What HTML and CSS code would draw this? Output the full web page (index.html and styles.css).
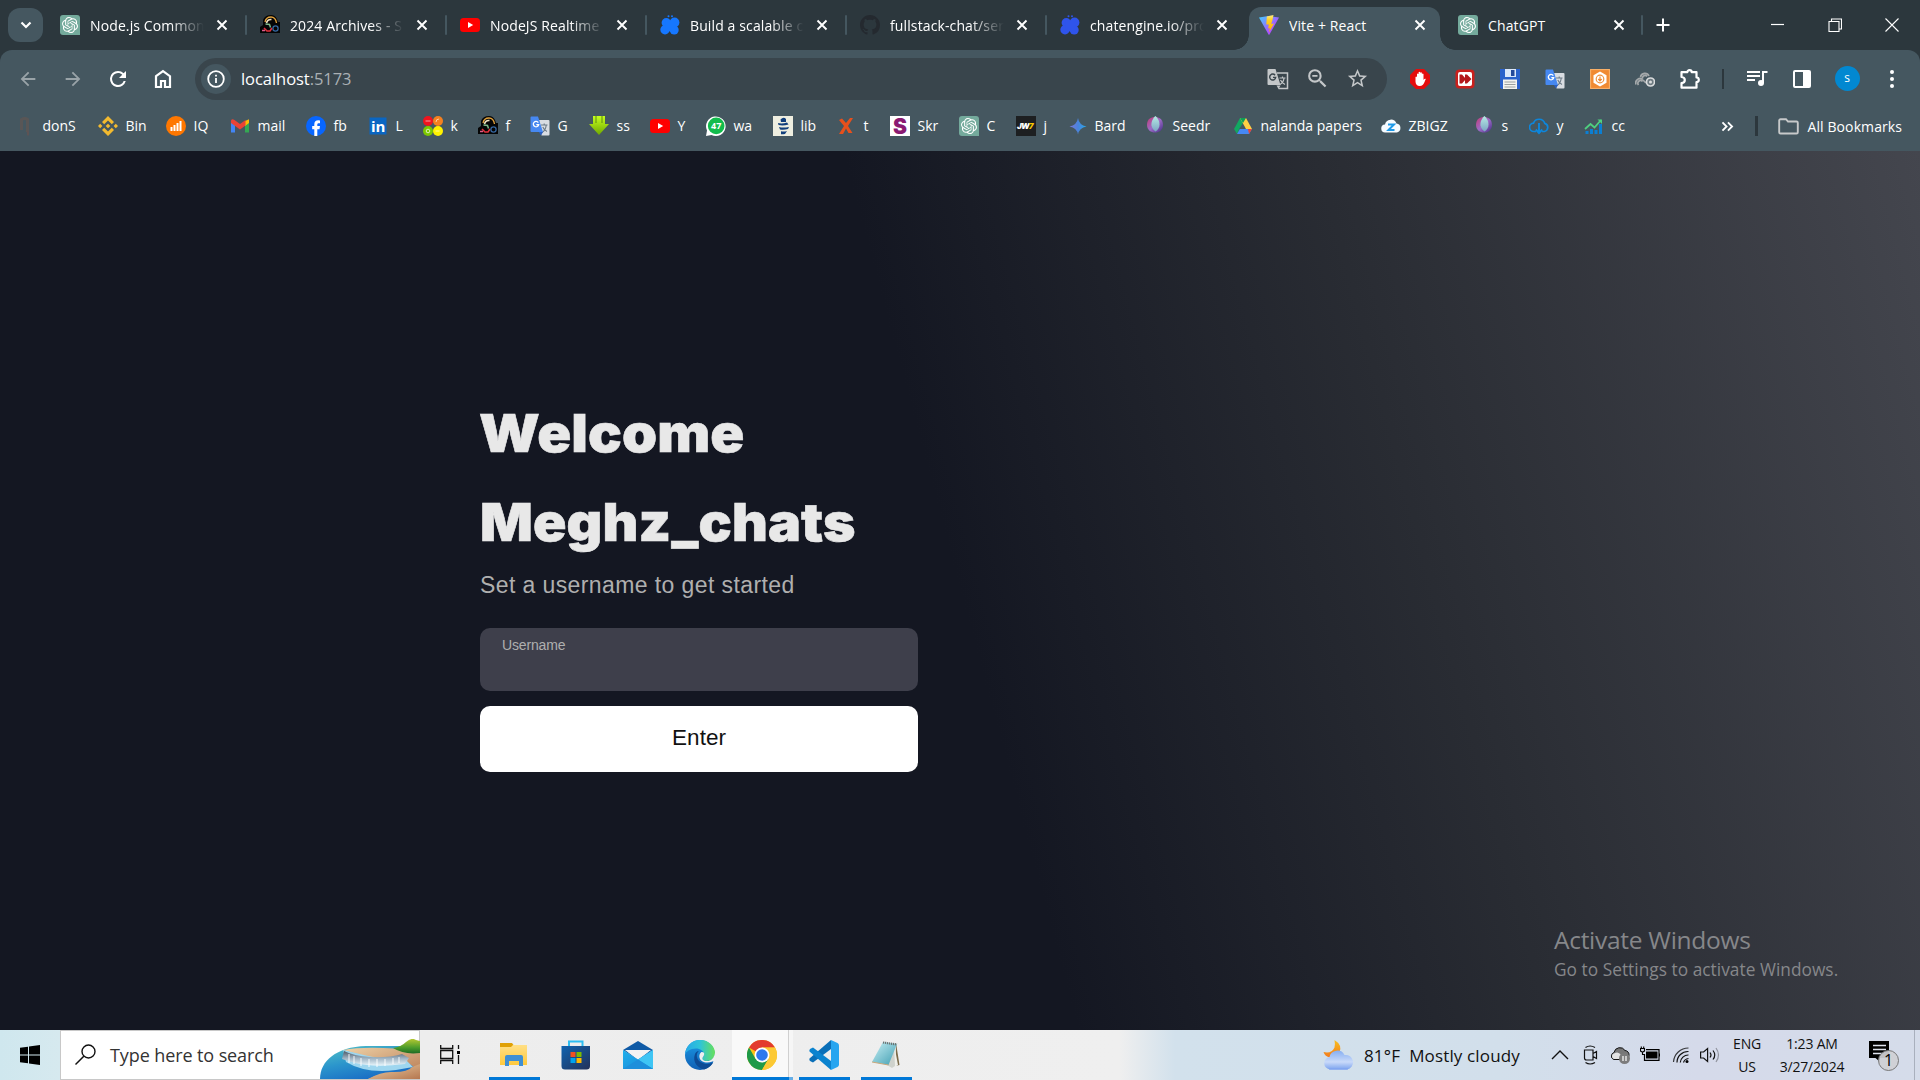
FILE: index.html
```html
<!DOCTYPE html>
<html lang="en">
<head>
<meta charset="utf-8">
<title>Vite + React</title>
<link rel="stylesheet" href="styles.css">
</head>
<body>
<svg class="defs" aria-hidden="true">
  <defs>
    <linearGradient id="gVite" x1="0" y1="0" x2="1" y2="1"><stop offset="0" stop-color="#41d1ff"/><stop offset=".6" stop-color="#a45cff"/><stop offset="1" stop-color="#bd34fe"/></linearGradient>
    <linearGradient id="gBolt" x1="0" y1="0" x2="0" y2="1"><stop offset="0" stop-color="#ffea83"/><stop offset=".3" stop-color="#ffcf20"/><stop offset="1" stop-color="#ffa800"/></linearGradient>
    <linearGradient id="gSeed" x1="0" y1="0" x2="1" y2="1"><stop offset="0" stop-color="#c23a75"/><stop offset=".5" stop-color="#9d6cc8"/><stop offset="1" stop-color="#432c83"/></linearGradient>
    <linearGradient id="gSeed2" x1="0" y1="0" x2="0" y2="1"><stop offset="0" stop-color="#b5ebe4"/><stop offset="1" stop-color="#7da4c4"/></linearGradient>
    <linearGradient id="gBard" x1="0" y1="0" x2="1" y2="0"><stop offset="0" stop-color="#7b78d8"/><stop offset=".5" stop-color="#4a83dc"/><stop offset="1" stop-color="#27a9e8"/></linearGradient>
    <linearGradient id="gDown" x1="0" y1="0" x2="0" y2="1"><stop offset="0" stop-color="#c5ff1e"/><stop offset="1" stop-color="#6fa800"/></linearGradient>
    <linearGradient id="gStore" x1="0" y1="0" x2="1" y2="1"><stop offset="0" stop-color="#0f63b0"/><stop offset="1" stop-color="#243158"/></linearGradient>
    <linearGradient id="gMail" x1="0" y1="0" x2="1" y2="1"><stop offset="0" stop-color="#1fb0ec"/><stop offset="1" stop-color="#1a86d6"/></linearGradient>
    <linearGradient id="gEdge" x1="0" y1="0" x2="1" y2="0"><stop offset="0" stop-color="#27a8e8"/><stop offset=".5" stop-color="#2fc4d8"/><stop offset="1" stop-color="#67e05a"/></linearGradient>
    <linearGradient id="gEdge2" x1="0" y1="0" x2="0" y2="1"><stop offset="0" stop-color="#1c9be6"/><stop offset="1" stop-color="#0f5fb4"/></linearGradient>
    <linearGradient id="gPad" x1="0" y1="0" x2="1" y2="1"><stop offset="0" stop-color="#c9f0f5"/><stop offset="1" stop-color="#3f9eb2"/></linearGradient>
    <linearGradient id="gFold" x1="0" y1="0" x2="0" y2="1"><stop offset="0" stop-color="#ffdf85"/><stop offset="1" stop-color="#ffc93d"/></linearGradient>
    <linearGradient id="gMoon" x1="0" y1="0" x2="0" y2="1"><stop offset="0" stop-color="#f9c01e"/><stop offset="1" stop-color="#f2791d"/></linearGradient>
    <linearGradient id="gCloud" x1="0" y1="0" x2="0" y2="1"><stop offset="0" stop-color="#86aef2"/><stop offset=".6" stop-color="#c9daf9"/><stop offset="1" stop-color="#7ba2ee"/></linearGradient>
    <linearGradient id="gSea" x1="0" y1="0" x2=".6" y2="1"><stop offset="0" stop-color="#55c4c6"/><stop offset=".5" stop-color="#2b95cc"/><stop offset="1" stop-color="#1769c4"/></linearGradient>
    <linearGradient id="gRock" x1="0" y1="0" x2="1" y2="1"><stop offset="0" stop-color="#eed2a8"/><stop offset="1" stop-color="#b5774f"/></linearGradient>
    <linearGradient id="gHill" x1="0" y1="0" x2="0" y2="1"><stop offset="0" stop-color="#b5c832"/><stop offset=".6" stop-color="#4c9c2b"/><stop offset="1" stop-color="#1d6a25"/></linearGradient>
    <linearGradient id="gFall" x1="0" y1="0" x2="0" y2="1"><stop offset="0" stop-color="#4c5866"/><stop offset=".5" stop-color="#9fb4c4"/><stop offset="1" stop-color="#e9f7fd"/></linearGradient>
  </defs>
  <symbol id="close" viewBox="0 0 12 12"><path d="M1.500 1.500l9 9M10.500 1.500l-9 9" stroke="#fff" stroke-width="1.900"/></symbol>
  <symbol id="gpt" viewBox="0 0 20 20"><path d="M3 0h14a3 3 0 0 1 3 3v17H3a3 3 0 0 1-3-3V3a3 3 0 0 1 3-3z" fill="#74aa9c"/><path transform="translate(2 2) scale(.667)" fill="#fff" d="M22.2819 9.8211a5.9847 5.9847 0 0 0-.5157-4.9108 6.0462 6.0462 0 0 0-6.5098-2.9A6.0651 6.0651 0 0 0 4.9807 4.1818a5.9847 5.9847 0 0 0-3.9977 2.9 6.0462 6.0462 0 0 0 .7427 7.0966 5.98 5.98 0 0 0 .511 4.9107 6.051 6.051 0 0 0 6.5146 2.9001A5.9847 5.9847 0 0 0 13.2599 24a6.0557 6.0557 0 0 0 5.7718-4.2058 5.9894 5.9894 0 0 0 3.9977-2.9001 6.0557 6.0557 0 0 0-.7475-7.0729zm-9.022 12.6081a4.4755 4.4755 0 0 1-2.8764-1.0408l.1419-.0804 4.7783-2.7582a.7948.7948 0 0 0 .3927-.6813v-6.7369l2.02 1.1686a.071.071 0 0 1 .038.052v5.5826a4.504 4.504 0 0 1-4.4945 4.4944zm-9.6607-4.1254a4.4708 4.4708 0 0 1-.5346-3.0137l.142.0852 4.783 2.7582a.7712.7712 0 0 0 .7806 0l5.8428-3.3685v2.3324a.0804.0804 0 0 1-.0332.0615L9.74 19.9502a4.4992 4.4992 0 0 1-6.1408-1.6464zM2.3408 7.8956a4.485 4.485 0 0 1 2.3655-1.9728V11.6a.7664.7664 0 0 0 .3879.6765l5.8144 3.3543-2.0201 1.1685a.0757.0757 0 0 1-.071 0l-4.8303-2.7865A4.504 4.504 0 0 1 2.3408 7.872zm16.5963 3.8558L13.1038 8.364 15.1192 7.2a.0757.0757 0 0 1 .071 0l4.8303 2.7913a4.4944 4.4944 0 0 1-.6765 8.1042v-5.6772a.79.79 0 0 0-.407-.667zm2.0107-3.0231l-.142-.0852-4.7735-2.7818a.7759.7759 0 0 0-.7854 0L9.409 9.2297V6.8974a.0662.0662 0 0 1 .0284-.0615l4.8303-2.7866a4.4992 4.4992 0 0 1 6.6802 4.66zM8.3065 12.863l-2.02-1.1638a.0804.0804 0 0 1-.038-.0567V6.0742a4.4992 4.4992 0 0 1 7.3757-3.4537l-.142.0805L8.704 5.459a.7948.7948 0 0 0-.3927.6813zm1.0976-2.3654l2.602-1.4998 2.6069 1.4998v2.9994l-2.5974 1.4997-2.6067-1.4997Z"/></symbol>
  <symbol id="ftp" viewBox="0 0 20 20"><path d="M3 5Q5 0 11 0q4 0 6 4l1 3h2v11H0v-6l3-2z" fill="#050505"/><path d="M5 7q1-5 6-5 4.500 0 5.500 6" fill="none" stroke="#e2a23c" stroke-width="1.300"/><path d="M6.500 8q1-4 5-3.500" fill="none" stroke="#f3e4c4" stroke-width="1.600"/><path d="M5.500 9l4 .5 1 3" fill="none" stroke="#7fb98a" stroke-width="1.500"/><path d="M4 13l3 3h3l2-3" fill="none" stroke="#e0303c" stroke-width="1.600"/><path d="M2 15.500h3" stroke="#de5b8b" stroke-width="1.500"/><circle cx="15.500" cy="13.500" r="2.600" fill="none" stroke="#3567a0" stroke-width="1.300"/></symbol>
  <symbol id="yt" viewBox="0 0 20 20"><rect y="3" width="20" height="14" rx="3.500" fill="#f00"/><path d="M8 7l5.200 3L8 13z" fill="#fff"/></symbol>
  <symbol id="bug" viewBox="0 0 20 20"><circle cx="6.300" cy="7.700" r="4.700"/><circle cx="14.500" cy="7.500" r="4.900"/><circle cx="5" cy="14.800" r="4.700"/><circle cx="14.200" cy="15" r="4.500"/><path d="M6 6h9v9l-5 1.500L5 14z"/><circle cx="8.500" cy="1.300" r="1"/><circle cx="12" cy="1.300" r="1"/></symbol>
  <symbol id="github" viewBox="0 0 16 16"><path fill="#24292f" d="M8 0C3.580 0 0 3.580 0 8c0 3.540 2.290 6.530 5.470 7.590.4.070.55-.17.55-.38 0-.19-.01-.82-.01-1.490-2.010.37-2.530-.49-2.690-.94-.09-.23-.48-.94-.82-1.130-.28-.15-.68-.52-.01-.53.63-.01 1.080.58 1.230.82.72 1.210 1.870.87 2.330.66.070-.52.28-.87.51-1.070-1.780-.2-3.640-.89-3.640-3.950 0-.87.31-1.590.82-2.150-.08-.2-.36-1.020.08-2.120 0 0 .67-.21 2.200.82.64-.18 1.320-.27 2-.27s1.360.09 2 .27c1.530-1.040 2.200-.82 2.200-.82.44 1.100.16 1.920.08 2.120.51.56.82 1.270.82 2.150 0 3.070-1.870 3.750-3.650 3.950.29.25.54.73.54 1.480 0 1.070-.01 1.930-.01 2.200 0 .21.15.46.55.38A8.010 8.010 0 0 0 16 8c0-4.420-3.580-8-8-8z"/></symbol>
  <symbol id="gtr" viewBox="0 0 20 20"><path d="M9 4h9.500a1 1 0 0 1 1 1v13.500a1 1 0 0 1-1 1h-7z" fill="#d9dde2"/><path d="M11 9h6.500M14.200 7.500V9M12 16.500q4-2.500 4.200-7.500M12.800 11q1.500 3.500 4.200 4.500" stroke="#6b7a86" stroke-width="1.100" fill="none"/><path d="M1.500.5H8l5 15.500H1.500a1 1 0 0 1-1-1V1.500a1 1 0 0 1 1-1z" fill="#4688f1"/><path d="M8.800 16h4.200l-2 3.500z" fill="#2c5fc0"/><path d="M8.300 6.600A2.700 2.700 0 1 0 8.700 8.600H6.300" fill="none" stroke="#fff" stroke-width="1.300"/></symbol>
  <symbol id="seedr" viewBox="0 0 20 20"><path d="M10 1C6 1 2 3 2 9c0 5 4 7.500 8 7.500S18 14 18 9c0-6-4-8-8-8z" fill="url(#gSeed)"/><path d="M10.500 0C8 2 6 6 6.500 9.500c.5 3 2.500 5 4 6 2.500-1.500 4-4 4-7C14.500 5 13 2 10.500 0z" fill="url(#gSeed2)"/></symbol>
</svg>

<div class="screen">
  <header class="browser">
    <div class="tabstrip">
      <div class="tabsearch"><svg width="12" height="8" viewBox="0 0 12 8"><path d="M1.500 1.500L6 6l4.500-4.500" fill="none" stroke="#fff" stroke-width="2.200"/></svg></div>
      <div class="tabs">
        <div class="tab"><svg class="fav"><use href="#gpt"/></svg><span class="title fade">Node.js Common</span><svg class="x"><use href="#close"/></svg></div>
        <div class="tab"><svg class="fav"><use href="#ftp"/></svg><span class="title fade">2024 Archives - S</span><svg class="x"><use href="#close"/></svg></div>
        <div class="tab"><svg class="fav"><use href="#yt"/></svg><span class="title fade">NodeJS Realtime</span><svg class="x"><use href="#close"/></svg></div>
        <div class="tab"><svg class="fav bug-a"><use href="#bug"/></svg><span class="title fade">Build a scalable c</span><svg class="x"><use href="#close"/></svg></div>
        <div class="tab"><svg class="fav"><use href="#github"/></svg><span class="title fade">fullstack-chat/ser</span><svg class="x"><use href="#close"/></svg></div>
        <div class="tab bare"><svg class="fav bug-b"><use href="#bug"/></svg><span class="title fade">chatengine.io/pro</span><svg class="x"><use href="#close"/></svg></div>
        <div class="tab active"><svg class="fav" viewBox="0 0 20 20"><path d="M0 2.500L9.500 1l.5 0L20 2.500 10.500 19.500q-.5.700-1 0z" fill="url(#gVite)"/><path d="M14.500 0L7.800 1.400l-.5 8h2.500l-.7 4 1.700-.4-.8 4.500 5-9-2.700.4 1.300-4.500z" fill="url(#gBolt)"/></svg><span class="title">Vite + React</span><svg class="x"><use href="#close"/></svg></div>
        <div class="tab last"><svg class="fav"><use href="#gpt"/></svg><span class="title">ChatGPT</span><svg class="x"><use href="#close"/></svg></div>
      </div>
      <svg class="newtab" viewBox="0 0 14 14"><path d="M7 .5v13M.5 7h13" stroke="#fff" stroke-width="2"/></svg>
      <div class="winctl">
        <svg viewBox="0 0 14 14"><path d="M0 6.500h13" stroke="#fff" stroke-width="1.200"/></svg>
        <svg viewBox="0 0 14 14"><path d="M1 3.500h10v10H1zM3.500 3.500V1h10v10H11" fill="none" stroke="#fff" stroke-width="1.100"/></svg>
        <svg viewBox="0 0 14 14"><path d="M.5.5l13 13M13.500.5l-13 13" stroke="#fff" stroke-width="1.100"/></svg>
      </div>
    </div>

    <div class="chrome">
      <div class="toolbar">
        <div class="cell dim"><svg class="i20" viewBox="0 0 24 24"><path d="M20 11H7.830l5.590-5.590L12 4l-8 8 8 8 1.410-1.410L7.830 13H20z" transform="translate(-1.200 -1.200) scale(1.100)"/></svg></div>
        <div class="cell dim"><svg class="i20" viewBox="0 0 24 24"><path d="M4 11h12.170l-5.590-5.590L12 4l8 8-8 8-1.410-1.410L16.170 13H4z" transform="translate(-1.200 -1.200) scale(1.100)"/></svg></div>
        <div class="cell"><svg class="i24" viewBox="0 0 24 24"><path d="M17.650 6.350A7.960 7.960 0 0 0 12 4a8 8 0 1 0 7.730 10h-2.080A6 6 0 1 1 12 6c1.660 0 3.140.69 4.220 1.780L13 11h7V4z"/></svg></div>
        <div class="cell"><svg class="i20" viewBox="0 0 20 20"><path d="M3 7.200L10 2l7 5.200V18h-5v-6H8v6H3z" fill="none" stroke="#fff" stroke-width="2.200"/></svg></div>
        <div class="omnibox">
          <div class="info"><svg width="18" height="18" viewBox="0 0 18 18"><circle cx="9" cy="9" r="7.800" fill="none" stroke="#fff" stroke-width="1.800"/><path d="M9 8v5M9 4.800v1.800" stroke="#fff" stroke-width="1.800"/></svg></div>
          <span class="url">localhost<i>:5173</i></span>
          <div class="omni-icons">
            <svg width="22" height="22" viewBox="0 0 22 22"><path d="M10 5h10.500v15.500H11.500" fill="none" stroke="#c4c7c9" stroke-width="1.500"/><path d="M12.500 10h6M15.500 8.500V10M13 16.500q3.800-2.500 4-6.500M13.500 12q1.500 3 4.500 4.500" fill="none" stroke="#c4c7c9" stroke-width="1.200"/><path d="M1.500 1h7l5 16H1.500a1 1 0 0 1-1-1V2a1 1 0 0 1 1-1z" fill="#c4c7c9"/><path d="M9.500 17.500h4l-2 3.500z" fill="#c4c7c9"/><path d="M8.100 7.200A3 3 0 1 0 8.700 9.400H6" fill="none" stroke="#39454c" stroke-width="1.400"/></svg>
            <svg width="25" height="25" viewBox="0 0 24 24" fill="#c4c7c9"><path d="M15.500 14h-.79l-.28-.27A6.471 6.471 0 0 0 16 9.500 6.500 6.500 0 1 0 9.500 16c1.610 0 3.090-.59 4.230-1.570l.27.28v.79l5 4.990L20.490 19zm-6 0A4.500 4.500 0 1 1 14 9.500 4.500 4.500 0 0 1 9.500 14zM7 8.700h5v1.600H7z"/></svg>
            <svg width="23" height="23" viewBox="0 0 24 24" fill="#c4c7c9"><path d="M22 9.240l-7.190-.62L12 2 9.190 8.630 2 9.240l5.460 4.730L5.820 21 12 17.270 18.180 21l-1.630-7.030L22 9.240zM12 15.400l-3.760 2.270 1-4.280-3.320-2.880 4.380-.38L12 6.100l1.710 4.040 4.380.38-3.320 2.880 1 4.280z"/></svg>
          </div>
        </div>
        <div class="ext">
          <div class="cell"><svg class="i20" viewBox="0 0 20 20"><path d="M6 0h8l6 6v8l-6 6H6l-6-6V6z" fill="#e40d0d"/><path d="M5.500 8v4.500C5.500 15 7 17 9.800 17c2.500 0 3.500-1.500 4.500-3.500l1.500-3.500c-.8-.7-1.600-.2-2.300 1V5q-.8-1.200-1.600 0V3.800q-.8-1.100-1.700 0V3.200q-.8-1-1.600 0V5Q7.800 3.800 7 5v3q-.8-1-1.500 0z" fill="#fff"/></svg></div>
          <div class="cell"><svg class="i20" viewBox="0 0 20 20"><rect x=".5" y=".5" width="19" height="19" rx="4" fill="#c9201d"/><rect x="3" y="3" width="14" height="14" rx="2" fill="#fff"/><path d="M4.500 5.500H7l4 4.500-4 4.500H4.500V5.500zM10 5.500h2l4.500 4.500-4.500 4.500h-2z" fill="#b3181b"/></svg></div>
          <div class="cell"><svg class="i20" viewBox="0 0 20 20"><path d="M0 0h20v20H1.500L0 18.500z" fill="#2a62cb"/><path d="M5 0h11v8H5z" fill="#dbe8fb"/><path d="M11 1h3.500v6H11z" fill="#244a9b"/><path d="M3 10.500h14V20H3z" fill="#f4f4f0"/><path d="M4.500 13h11M4.500 15.500h11M4.500 18h11" stroke="#9aa0a0"/></svg></div>
          <div class="cell"><svg class="i20"><use href="#gtr"/></svg></div>
          <div class="cell"><svg class="i20" viewBox="0 0 20 20"><rect width="20" height="20" fill="#f08a32"/><rect x=".6" y=".6" width="18.800" height="18.800" fill="none" stroke="#f8b36f"/><path d="M10 2.500l6.500 3.700v7.600L10 17.500l-6.500-3.700V6.200z" fill="#fff"/><circle cx="10" cy="10" r="3.800" fill="none" stroke="#ee9342" stroke-width="1.200"/><path d="M10 7.500v4M8.300 10l1.700 1.800 1.700-1.800" fill="none" stroke="#ee8a32" stroke-width="1.200"/></svg></div>
          <div class="cell"><svg class="i20" viewBox="0 0 20 20"><g fill="none" stroke="#a5a9ab" stroke-width="1.700"><path d="M1 15.500a4.500 4.500 0 0 1 7-5M3.500 16a2.500 2.500 0 0 1 4-3.500M5.500 8a4.500 4.500 0 0 1 8.500-1M7.500 9a2.500 2.500 0 0 1 4.500-1.500M8 11l3 3"/></g><circle cx="15.500" cy="13" r="4" fill="#6d7a80" stroke="#dadcdd" stroke-width="1.700"/><circle cx="15.500" cy="13" r="1.500" fill="#dadcdd"/></svg></div>
          <div class="cell"><svg class="i22" viewBox="0 0 22 22"><path d="M2.500 4.200h5.800a2.200 2 0 0 1 4.400 0h4.800v5.300a2.200 2.200 0 0 1 0 4.600v5.600h-15v-4.500q3.300-.5 3.300-3.200t-3.300-3z" fill="none" stroke="#fff" stroke-width="2.200" stroke-linejoin="round"/></svg></div>
        </div>
        <div class="vline"></div>
        <div class="ext">
          <div class="cell"><svg class="i24" viewBox="0 0 24 24"><path d="M15 4H2v2h13zm0 4H2v2h13zM2 14h8v-2H2zM17 4v9.200c-.31-.11-.65-.18-1-.18a3 3 0 1 0 3 3V6h3.500V4z"/></svg></div>
          <div class="cell"><svg class="i20" viewBox="0 0 20 20"><path d="M3 1h14a2 2 0 0 1 2 2v14a2 2 0 0 1-2 2H3a2 2 0 0 1-2-2V3a2 2 0 0 1 2-2zm0 2v14h8V3z" fill-rule="evenodd"/></svg></div>
          <div class="cell"><span class="avatar">s</span></div>
          <div class="cell"><svg class="i20" viewBox="0 0 20 20"><circle cx="10" cy="3" r="2"/><circle cx="10" cy="10" r="2"/><circle cx="10" cy="17" r="2"/></svg></div>
        </div>
      </div>

      <div class="bookbar">
        <div class="bookmarks">
          <div class="bm"><svg viewBox="0 0 20 20"><path d="M6.500 14V3.500q3.500-2 6 0V16" fill="none" stroke="#595656" stroke-width="3"/><path d="M13 15v4.500" stroke="#5d5354" stroke-width="2"/></svg>donS</div>
          <div class="bm"><svg viewBox="0 0 20 20" fill="#f3ba2f"><path d="M10 0l6 6-2.200 2.200L10 4.400 6.200 8.200 4 6zM2.200 7.800L4.400 10l-2.200 2.200L0 10zM10 7.700l2.300 2.300-2.300 2.300L7.700 10zM17.800 7.800L20 10l-2.200 2.200-2.200-2.200zM10 20l6-6-2.200-2.200-3.800 3.800-3.800-3.800L4 14z"/></svg>Bin</div>
          <div class="bm"><svg viewBox="0 0 20 20"><circle cx="10" cy="10" r="10" fill="#ff7700"/><path d="M5.500 15v-4M8.500 15V9M11.500 15V7M14.500 15V5" stroke="#fff" stroke-width="2"/></svg>IQ</div>
          <div class="bm"><svg viewBox="0 0 20 20"><path d="M1 5v11.500h4V9z" fill="#4285f4"/><path d="M19 5v11.500h-4V9z" fill="#34a853"/><path d="M15 5l4-1.800V7l-4 3z" fill="#fbbc04"/><path d="M1 4.500Q2 2.500 4.500 4L10 8l5.500-4v5.500L10 13.500 1 7z" fill="#ea4335"/></svg>mail</div>
          <div class="bm"><svg viewBox="0 0 20 20"><circle cx="10" cy="10" r="10" fill="#0866ff"/><path d="M8.300 20v-6.800H6.200V10h2.100V8.500c0-3 1.500-4.200 4-4.200l1.700.1v2.900h-1.200c-1.200 0-1.500.5-1.500 1.500V10h2.700l-.5 3.200h-2.200V20z" fill="#fff"/></svg>fb</div>
          <div class="bm"><svg viewBox="0 0 20 20"><rect x="1.500" y="1.500" width="17" height="17" fill="#0a66c2"/><text x="3" y="15.500" class="ic-in">in</text></svg>L</div>
          <div class="bm"><svg viewBox="0 0 20 20"><circle cx="5" cy="5" r="5" fill="#f0141e"/><circle cx="15" cy="5" r="5" fill="#f5801f"/><circle cx="5" cy="15" r="5" fill="#7cc800"/><circle cx="15" cy="15" r="5" fill="#fff200"/><path d="M2.500 5h5M13 6q0-3 3-3M12.500 15h4" stroke="#fff" stroke-opacity=".6" fill="none"/><circle cx="5" cy="15" r="1.800" fill="none" stroke="#fff" stroke-opacity=".7"/></svg>k</div>
          <div class="bm"><svg><use href="#ftp"/></svg>f</div>
          <div class="bm"><svg><use href="#gtr"/></svg>G</div>
          <div class="bm"><svg viewBox="0 0 20 20"><path d="M4 0h12v8h4l-10 11L0 8h4z" fill="url(#gDown)"/><path d="M7 0v7M13 0v7" stroke="#5f8a10"/></svg>ss</div>
          <div class="bm"><svg><use href="#yt"/></svg>Y</div>
          <div class="bm"><svg viewBox="0 0 20 20"><path d="M0 20l1-5.500A9.800 9.800 0 1 1 5.500 19z" fill="#fff"/><circle cx="10.200" cy="9.900" r="8.300" fill="#12bc4c"/><text x="10.200" y="13.300" text-anchor="middle" class="ic-47">47</text></svg>wa</div>
          <div class="bm"><svg viewBox="0 0 20 20"><rect width="20" height="20" fill="#eeeee0"/><path d="M7.500 3.500q3-3 5.500-.5v3H8zM5 7q4 1 9-.5l1.500 2Q10 10 5.500 9zM6 11q4 1 10 0l-1 2q-4 1.200-8 .5zM8 15.300q3 .7 6-.3l-2 3q-3 .5-4 .2z" fill="#123f7c"/></svg>lib</div>
          <div class="bm"><svg viewBox="0 0 20 20"><path d="M3 4l3-1.500L10 7l4-5h3l-5 8 4.500 7h-4L10 12.500 7 18H3l5-8z" fill="#e8501c"/></svg>t</div>
          <div class="bm"><svg viewBox="0 0 20 20"><rect width="20" height="20" fill="#fff"/><text x="10" y="17.500" text-anchor="middle" class="ic-s">S</text></svg>Skr</div>
          <div class="bm"><svg><use href="#gpt"/></svg>C</div>
          <div class="bm"><svg viewBox="0 0 20 20"><rect width="20" height="20" fill="#1d1f21"/><text x="1" y="13" class="ic-jw">JW<tspan fill="#f5c400">7</tspan></text></svg>j</div>
          <div class="bm"><svg viewBox="0 0 20 20"><path d="M11 2q1 7 8.500 8.500Q12 12 11 18.500 10 12 2.500 10.500 10 9 11 2z" fill="url(#gBard)"/></svg>Bard</div>
          <div class="bm"><svg><use href="#seedr"/></svg>Seedr</div>
          <div class="bm"><svg viewBox="0 0 20 20"><path d="M7 2h6l-6.500 10.500L4 18l-3-5z" fill="#11a861"/><path d="M13 2l6 11h-6L7 2z" fill="#ffcf44"/><path d="M7 2h6l-3 5z" fill="#0f9d58"/><path d="M6.800 13H19l-3 5H4z" fill="#4688f4"/><path d="M15 13h4l-3 5z" fill="#ea4335"/></svg>nalanda papers</div>
          <div class="bm"><svg viewBox="0 0 20 20"><path d="M4.500 16.500a4 4 0 0 1-.5-8 6 6 0 0 1 11.500-1 4.600 4.600 0 0 1 .5 9z" fill="#f6fbff"/><path d="M7 8.500h6l-5.500 5.500H13.500" fill="none" stroke="#1e9ae8" stroke-width="2"/></svg>ZBIGZ</div>
          <div class="bm"><svg><use href="#seedr"/></svg>s</div>
          <div class="bm"><svg viewBox="0 0 20 20"><path d="M7 15.500H5a4.200 4.200 0 0 1-.5-8.400 6 6 0 0 1 11.300.3 4.200 4.200 0 0 1-.3 8.100H13" fill="none" stroke="#0d86dc" stroke-width="1.700"/><path d="M10 7v9M6.800 13.500L10 17l3.200-3.500" fill="none" stroke="#0d86dc" stroke-width="1.900"/></svg>y</div>
          <div class="bm"><svg viewBox="0 0 20 20"><path d="M3 18v-3M7.500 18v-5M12 18v-4M16.500 18V8" stroke="#0b7fd3" stroke-width="3"/><path d="M1 13l5.500-5 4 3.500L17 4" fill="none" stroke="#4fd07f" stroke-width="1.800"/><path d="M13.500 3.500H18V8z" fill="#4fd07f"/></svg>cc</div>
        </div>
        <svg class="more" viewBox="0 0 14 12"><path d="M1.500 1.500L6 6l-4.500 4.500M7.500 1.500L12 6l-4.500 4.500" fill="none" stroke="#fff" stroke-width="2"/></svg>
        <div class="vline"></div>
        <svg class="folder" viewBox="0 0 21 17"><path d="M2.500 1.200h5.500l2 2.300h8.500a1.300 1.300 0 0 1 1.300 1.300v9.400a1.300 1.300 0 0 1-1.300 1.300h-16a1.300 1.300 0 0 1-1.300-1.300V2.500a1.300 1.300 0 0 1 1.300-1.300z" fill="none" stroke="#c7c9ca" stroke-width="1.900"/></svg>
        <span class="all">All Bookmarks</span>
      </div>
    </div>
  </header>

  <main class="page">
    <form class="auth">
      <h1>Welcome</h1>
      <h1 class="second">Meghz_chats</h1>
      <p>Set a username to get started</p>
      <div class="field">Username</div>
      <button type="button">Enter</button>
    </form>
    <aside class="watermark"><div class="w1">Activate Windows</div><div class="w2">Go to Settings to activate Windows.</div></aside>
  </main>

  <footer class="taskbar">
    <div class="start"><svg width="20" height="20" viewBox="0 0 20 20"><path d="M0 2.800l8-1.100v7.800H0zM9 1.500L20 0v9.500H9zM0 10.500h8v7.800l-8-1.100zM9 10.500h11V20L9 18.500z"/></svg></div>
    <div class="search">
      <svg width="22" height="22" viewBox="0 0 22 22"><circle cx="13.500" cy="7.500" r="6.500" fill="none" stroke="#111" stroke-width="1.400"/><path d="M8.800 12.200L.5 20.500" stroke="#111" stroke-width="1.500"/></svg>
      <span>Type here to search</span>
      <svg class="falls" width="100" height="40" viewBox="0 0 100 40"><path d="M0 40C0 22 16 8 46 7h54v33z" fill="url(#gSea)"/><path d="M23 11Q50 6 100 12v28H48q18-9 40-6l6-6-12-8q-25 0-38-3z" fill="url(#gRock)"/><path d="M23 11l3 12q20 12 50 8l17-3-9-9q-22 2-40-3z" fill="#9ed6ef"/><path d="M24 12q10 5 26 6 18 1 32-3l7 4-4 6q-30 4-50-1L22 20z" fill="url(#gFall)"/><path d="M29 15v9M34 17v8M41 19v8M49 20v8M57 20v8M65 20v7M73 19v6M79 18v6" stroke="#fff" stroke-width="1.500" opacity=".6"/><path d="M48 40q14-8 26-7 14 0 18-5l8-3v15z" fill="url(#gRock)"/><path d="M73 9q8-1 13-6 6-5 10-2l4 1v12q-16 2-27-5z" fill="url(#gHill)"/></svg>
    </div>
    <div class="taskview"><svg width="20" height="20" viewBox="0 0 20 20"><path d="M.7 0v3.500h12V0M.7 19v-3.500h12V19M.7 5.500h12v8H.7zM18.500 0v4M18.500 10v9" fill="none" stroke="#111" stroke-width="1.300"/><rect x="17" y="6" width="3" height="3"/></svg></div>
    <div class="apps">
      <div class="app open"><svg width="28" height="26" viewBox="0 0 28 26"><path d="M0 1h12l1.500 2-1 3H0z" fill="#e0a106"/><path d="M0 5h11l2-2h14v20H0z" fill="url(#gFold)"/><path d="M5 24V15q0-2 2-2h14q2 0 2 2v9h-4v-5H9v5z" fill="#3f8fd4"/></svg></div>
      <div class="app"><svg width="30" height="30" viewBox="0 0 30 30"><path d="M8 7V1.500h13.500V7" fill="none" stroke="#2cbdf2" stroke-width="2"/><path d="M.5 6h28.500v20a3.500 3.500 0 0 1-3.500 3.500H4A3.500 3.500 0 0 1 .5 26z" fill="url(#gStore)"/><path d="M9.500 12h5v5h-5z" fill="#f25022"/><path d="M15.500 12h5v5h-5z" fill="#7fba00"/><path d="M9.500 18h5v5h-5z" fill="#00a4ef"/><path d="M15.500 18h5v5h-5z" fill="#ffb900"/></svg></div>
      <div class="app"><svg width="30" height="28" viewBox="0 0 30 28"><path d="M0 9L15 0l15 9-15 10z" fill="#0f5aa6"/><path d="M2 9h26L15 19z" fill="#f3f3f3"/><path d="M0 9l15 9.500L30 9v19H0z" fill="url(#gMail)"/><path d="M15 18.500L30 9v19z" fill="#3fc5f4"/><path d="M0 28l15-9.500L30 28z" fill="#1e8fdb"/></svg></div>
      <div class="app"><svg width="30" height="30" viewBox="0 0 30 30"><circle cx="15" cy="15" r="15" fill="url(#gEdge2)"/><path d="M0 14C1 6 7 0 15 0c9 0 15 6.500 15 13 0 5-4 8-8.500 8-3 0-4.500-1-4.500-2 0-1.200 2-2 2-4.500C19 11 15 8.500 11 8.500 5 8.500 1 12 0 14z" fill="url(#gEdge)"/><path d="M10 14c-3 8 3 14.500 9.500 15.500C23.500 28 27 25 28 22.500c-3 1.500-6 2-9 1C13.500 22 11 18 12 14c.5-1.500 1-2.500 2-3-2 0-3.500 1.500-4 3z" fill="#0c4a94"/><path d="M30 13v9l-2 .5c1-1 .5-1.500-.5-1-6 2.500-12 .5-13-4-.5-3 1-5.500 2.500-5.500 3 0 2.500 3 1 5-1.500 2 0 4 4 4 4 0 7-2.500 8-8z" fill="#efefef"/></svg></div>
      <div class="app current"><svg width="30" height="30" viewBox="0 0 30 30"><circle cx="15" cy="15" r="15" fill="#fbc116"/><path d="M15 15L2 7.500A15 15 0 0 1 28 7.500H15z" fill="#e33b2e"/><path d="M2 7.500A15 15 0 0 0 15 30l6.500-11.300L8.500 18.700z" fill="#1f9a48"/><path d="M21.500 18.700L15 30A15 15 0 0 0 28 7.500H15z" fill="#fcc934"/><circle cx="15" cy="15" r="7.500" fill="#fff"/><circle cx="15" cy="15" r="5.800" fill="#2f79ee"/></svg></div>
      <div class="app open"><svg width="30" height="30" viewBox="0 0 30 30"><path d="M22 0v9L4 22.500 1 21q-1-1-.5-2.500L22 0z" fill="#0a6fb8"/><path d="M22 30v-9L4 7.500 1 9q-1 1-.5 2.500L22 30z" fill="#0b83cf"/><path d="M22 0l6.500 3q1.500.8 1.500 2.500v19q0 1.700-1.500 2.500L22 30z" fill="#27a5f0"/></svg></div>
      <div class="app open"><svg width="28" height="28" viewBox="0 0 28 28"><path d="M24 2l3.500 22-4 1z" fill="#7b6a48"/><path d="M22 3l4 21-5 3-6-3z" fill="#f0f0ea"/><path d="M22 3l1 22-3 2-5-3z" fill="#cfd2cc"/><path d="M11 1l14 2-8.500 21L0 21z" fill="url(#gPad)"/><path d="M11 1.500l14 2" stroke="#6d7473" stroke-width="2.200" stroke-dasharray="1.200 .8"/><path d="M0 21l16.500 3" stroke="#caa77a"/></svg></div>
    </div>
    <div class="tray">
      <svg class="weather" width="31" height="30" viewBox="0 0 31 30"><path d="M11.500 0q8 5 5 12-3 6-9.500 5.500-5-.8-6.500-5.500 8 2 11-4.500.8-3.500 0-7.500z" fill="url(#gMoon)"/><path d="M7 29.500a6.300 6.300 0 0 1-.5-12.500A8 8 0 0 1 21.500 15a7.200 7.200 0 0 1 2.500 14.500z" fill="url(#gCloud)"/><path d="M6 29h19" stroke="#7fa2f2"/></svg>
      <span class="temp">81°F&nbsp; Mostly cloudy</span>
      <div class="icons">
        <svg viewBox="0 0 20 20"><path d="M2 14l8-8 8 8" fill="none" stroke="#111" stroke-width="1.400"/></svg>
        <svg viewBox="0 0 20 20"><path d="M4.500 5h8.500v10H6.500q-2 0-2-2zM13 8.500l3.500-2v7l-3.500-2M5.500 2.500q4.500-3 9.500 0M5.500 17.500q4.500 3 9.500 0" fill="none" stroke="#111" stroke-width="1.200"/></svg>
        <svg viewBox="0 0 20 20"><path d="M3.500 14.500a3.800 3.800 0 0 1 .5-7 6 6 0 0 1 11-2 4.300 4.300 0 0 1 4 5q0 3.500-4 4z" fill="#777" stroke="#111"/><path d="M4 14a3 3 0 0 1 .5-5.800 5 5 0 0 1 6.500 1.800l3 4z" fill="#e3e3e3"/><circle cx="14.500" cy="13.500" r="5.500" fill="#7c7c7c"/><path d="M13 11v5M16 11v5" stroke="#fff" stroke-width="1.200"/></svg>
        <svg viewBox="0 0 20 20"><path d="M6 6.500h11.500v7H6z"/><path d="M6 4.600h13v10.800H4.500V9M19.500 8.500v3" fill="none" stroke="#000" stroke-width="1.200"/><path d="M.5 3.500h4v2.500q-2 2-4 0zM1.300 1.500v2M3.700 1.500v2M2.500 7v2.500h2" fill="none" stroke="#000" stroke-width="1.100"/></svg>
        <svg viewBox="0 0 20 20"><g fill="none" stroke="#111" stroke-width="1.200"><path d="M3.500 17A15 15 0 0 1 18.500 3" opacity=".8"/><path d="M7 17.500A11 11 0 0 1 18.500 6.500"/><path d="M10.300 17.500A8 8 0 0 1 18.500 10"/><path d="M13.500 17.500Q14.500 14 18.500 13.500"/></g><circle cx="17" cy="16.500" r="1.500"/></svg>
        <svg viewBox="0 0 20 20"><g fill="none" stroke="#111" stroke-width="1.200"><path d="M.6 7v6h3l4 3.500v-13L3.600 7z"/><path d="M10 7.500q2 2.500 0 5M13 5.500q3.500 4.500 0 9"/><path d="M16 3q5 7 0 14" opacity=".35"/></g></svg>
      </div>
      <div class="lang">ENG<br>US</div>
      <div class="clock">1:23 AM<br>3/27/2024</div>
      <svg class="notif" width="32" height="32" viewBox="0 0 32 32"><path d="M0 0h20v17h-9v4l-4.500-4H0z"/><path d="M4 4.500h13M4 8.500h13M4 12.500h9" stroke="#dfe3ee" stroke-width="1.300"/><circle cx="19.500" cy="19.500" r="10" fill="#d0d0d4" fill-opacity=".93" stroke="#777"/><text x="19.500" y="25" text-anchor="middle" class="ic-1">1</text></svg>
      <div class="peek"></div>
    </div>
  </footer>
</div>
</body>
</html>
```

FILE: styles.css
```css
* { box-sizing: border-box; }
body { margin: 0; overflow: hidden; font-family: "Open Sans", "Noto Sans", sans-serif; }
svg { display: block; flex: none; }
.defs { position: absolute; width: 0; height: 0; }
.screen { width: 1920px; height: 1080px; display: flex; flex-direction: column; }

/* tab strip */
.browser { height: 151px; background: #2c373d; color: #fff; flex: none; }
.tabstrip { height: 50px; display: flex; align-items: center; padding-left: 8px; }
.tabsearch { width: 35px; height: 34px; border-radius: 12px; background: #455760; display: flex; align-items: center; justify-content: center; margin-right: 5px; }
.tabs { display: grid; grid-template-columns: repeat(5, 200px) 199px 199px 198px; height: 50px; }
.tab { position: relative; display: flex; align-items: center; padding-left: 12px; }
.tab::after { content: ""; position: absolute; right: 1px; top: 15px; width: 2.500px; height: 20px; border-radius: 1px; background: #455760; }
.tab.bare::after { display: none; }
.fav { width: 20px; height: 20px; }
.bug-a { fill: #1677ff; }
.bug-b { fill: #2f54eb; }
.title { width: 118px; padding-top: 1px; margin-left: 10px; overflow: hidden; white-space: nowrap; font-size: 14px; line-height: 20px; letter-spacing: .12px; }
.fade { -webkit-mask-image: linear-gradient(90deg, #000 80px, transparent 114px); mask-image: linear-gradient(90deg, #000 80px, transparent 114px); }
.x { width: 12px; height: 12px; margin-left: 8px; }
.tab.active { height: 43px; margin: 7px 6px 0 2px; padding: 0 0 7px 10px; border-radius: 12px 12px 0 0; background: #455760; }
.tab.active .x, .tab.last .x { margin-left: 7px; }
.tab.active::before, .tab.active::after { content: ""; position: absolute; top: auto; bottom: 0; width: 15px; height: 15px; border-radius: 0; background: radial-gradient(circle at 0 0, transparent 14.500px, #455760 15px); }
.tab.active::before { left: -15px; }
.tab.active::after { right: -15px; background: radial-gradient(circle at 100% 0, transparent 14.500px, #455760 15px); }
.newtab { width: 14px; height: 14px; margin-left: 12px; }
.winctl { display: flex; gap: 43px; margin-left: 101px; }
.winctl svg { width: 14px; height: 14px; }

/* toolbar */
.chrome { height: 101px; background: #455760; border-radius: 12px 12px 0 0; }
.toolbar { height: 57px; padding-left: 5px; display: flex; align-items: center; fill: #fff; }
.cell { width: 45px; display: flex; justify-content: center; align-items: center; flex: none; }
.dim { opacity: .45; }
.i20 { width: 20px; height: 20px; }
.i22 { width: 22px; height: 22px; }
.i24 { width: 24px; height: 24px; }
.omnibox { width: 1192px; height: 42px; margin-left: 10px; padding: 0 18px 0 6px; border-radius: 21px; background: #39454c; display: flex; align-items: center; }
.info { width: 30px; height: 30px; border-radius: 50%; background: #455760; display: flex; align-items: center; justify-content: center; }
.url { margin-left: 10px; padding-top: 1px; font-size: 16.500px; line-height: 22px; letter-spacing: -.05px; }
.url i { font-style: normal; color: #aab0b4; }
.omni-icons { margin-left: auto; display: flex; align-items: center; gap: 16px; }
.ext { display: flex; align-items: center; }
.omnibox + .ext { margin-left: 10.500px; }
.vline { width: 2.500px; height: 20px; background: #2c373d; }
.toolbar .vline { margin: 0 10.500px 0 9px; }
.avatar { width: 25px; height: 25px; border-radius: 50%; background: #0288d1; font-size: 12px; line-height: 24px; text-align: center; }

/* bookmarks */
.bookbar { height: 38px; padding-left: 15px; display: flex; align-items: center; font-size: 14px; }
.bookmarks { width: 1706px; display: grid; grid-template-columns: 83px 68px 64px 76px 62px 55px 55px 52px 59px 61px 56px 67px 63px 54px 69px 57px 51px 78px 88px 148px 93px 55px 55px 40px; }
.bm { display: flex; align-items: center; gap: 7.500px; white-space: nowrap; line-height: 20px; letter-spacing: 0; }
.bm svg { width: 20px; height: 20px; }
.more { width: 13px; height: 11px; }
.bookbar .vline { margin: 0 20px 0 21px; }
.folder { width: 21px; height: 17px; }
.all { margin-left: 9px; white-space: nowrap; letter-spacing: .1px; }
.ic-in { font: bold 15px "Open Sans", sans-serif; fill: #fff; }
.ic-47 { font: bold 9px "Open Sans", sans-serif; fill: #fff; }
.ic-s { font: 900 21px Inter, sans-serif; fill: #8b1a72; }
.ic-jw { font: italic 900 8px Inter, sans-serif; fill: #fff; letter-spacing: -.8px; }
.ic-1 { font: 16px "Open Sans", sans-serif; fill: #000; }

/* page */
.page { position: relative; flex: 1; padding: 238px 0 0 480px; background: linear-gradient(75deg, #141722 50%, #292c33 72%, #44464e 100%); font-family: "Liberation Sans", Arial, sans-serif; }
.auth { width: 438px; }
h1 { margin: 0 0 0 -1px; font: 900 52.500px/89px Inter, sans-serif; letter-spacing: .1px; color: #e8e8e8; white-space: nowrap; transform: scaleX(1.07); transform-origin: 0 0; -webkit-text-stroke: .6px #e8e8e8; }
h1.second { margin-left: 0; transform: scaleX(1.053); }
.auth p { margin: 0; height: 61px; font-size: 23px; line-height: 36px; letter-spacing: .4px; color: #afafaf; white-space: nowrap; }
.field { height: 63px; padding: 8px 22px; border-radius: 10px; background: #3e3f4b; font-size: 14px; line-height: 19px; letter-spacing: -.15px; color: #afafaf; }
button { display: block; width: 438px; height: 66px; margin-top: 15px; padding: 0 0 2px; border: 0; border-radius: 10px; background: #fff; color: #111; font: 22.500px "Liberation Sans", Arial, sans-serif; }
.watermark { position: absolute; left: 1554px; top: 771px; font-family: "Open Sans", sans-serif; color: #86878a; white-space: nowrap; }
.w1 { font-size: 24.500px; line-height: 36px; letter-spacing: -.28px; }
.w2 { font-size: 17.300px; line-height: 24px; letter-spacing: .03px; }

/* taskbar */
.taskbar { height: 50px; display: flex; color: #111; background: linear-gradient(90deg, #cfe7ee 0, #d6e9ef 60px, #ededed 420px, #efefef 1120px, #d2e1ec 1175px, #d2dfeb 1500px, #d5daea 1700px, #d5dcea 100%); }
.start { width: 60px; display: flex; align-items: center; justify-content: center; }
.search { width: 360px; display: flex; align-items: center; padding-left: 14px; background: #fff; border: 1px solid #c8c8c8; }
.search span { width: 211px; margin-left: 13px; font-size: 18px; letter-spacing: -.1px; color: #333; white-space: nowrap; }
.falls { align-self: flex-end; margin-right: -1px; }
.taskview { width: 63px; display: flex; align-items: center; padding-left: 20px; }
.apps { display: flex; }
.app { position: relative; width: 62px; display: flex; align-items: center; justify-content: center; }
.open::after { content: ""; position: absolute; left: 6px; right: 5px; bottom: 0; height: 3px; background: #0078d7; }
.current { background: linear-gradient(90deg, transparent 1px, #f9f9f9 1px, #f9f9f9 57px, #d0d0d0 57px, #d0d0d0 58px, #f6f6f6 58px); }
.current::after { content: ""; position: absolute; left: 1px; right: 0; bottom: 0; height: 3px; background: linear-gradient(90deg, #0078d7 57px, #66aee7 57px); }
.tray { margin-left: auto; display: flex; align-items: center; }
.temp { width: 186px; margin-left: 10px; font-size: 17px; letter-spacing: .14px; white-space: nowrap; }
.icons { display: flex; gap: 10px; }
.icons svg { width: 20px; height: 20px; }
.lang, .clock { font-size: 14px; line-height: 23px; text-align: center; letter-spacing: -.2px; }
.lang { width: 40px; margin-left: 7px; }
.clock { width: 80px; margin-left: 5px; }
.notif { margin: 4px 0 0 17px; }
.peek { width: 6px; height: 50px; margin-left: 13px; border-left: 1px solid #a9b0bd; }
```
